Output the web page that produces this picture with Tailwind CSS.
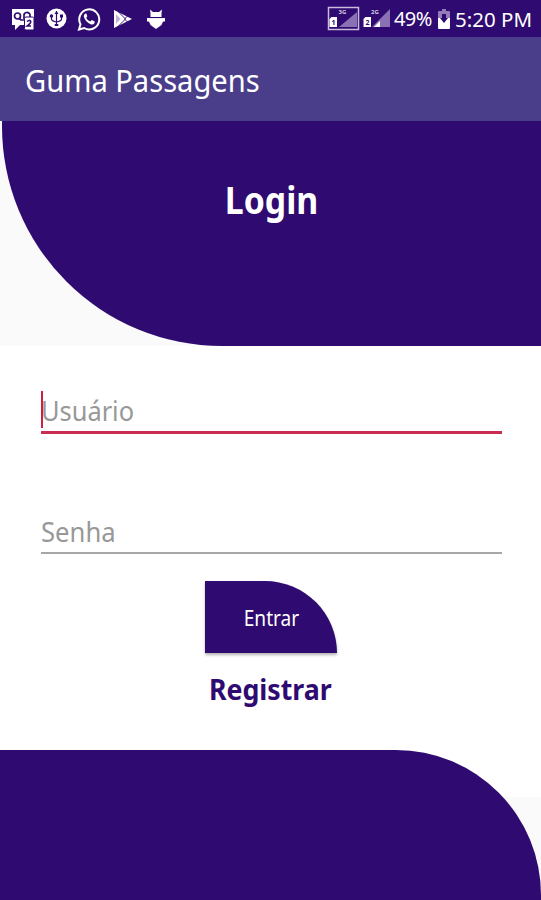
<!DOCTYPE html>
<html lang="pt">
<head>
<meta charset="utf-8">
<title>Guma Passagens</title>
<script src="https://cdn.jsdelivr.net/npm/@tailwindcss/browser@4"></script>
</head>
<body class="w-[541px] h-[900px] overflow-hidden flex flex-col bg-[#fafafa] font-['Noto_Sans',sans-serif]">
<header class="shrink-0">
  <div class="h-[37px] bg-[#2f0a70] flex items-center justify-between pl-[11px] pr-[8px] text-white">
    <div class="flex items-center gap-[10.500px]">
      <svg class="w-6 h-6" viewBox="0 0 24 24"><path d="M1 2h22v16H9l-5 5v-5H1z" fill="#fff"/><g fill="none" stroke="#2f0a70" stroke-width="1.700"><circle cx="6.500" cy="9" r="3"/><path d="M8 11.500l2 1.500h4M13 12V9a3 3 0 0 1 6-1v3"/></g><rect x="13.500" y="10" width="9.500" height="13" rx="1.500" fill="#fff" stroke="#2f0a70"/><path d="M16 14.500q2-2 3.500-.5t-3.500 5h4" fill="none" stroke="#2f0a70" stroke-width="1.500"/></svg>
      <svg class="w-[21px] h-[21px]" viewBox="0 0 21 21"><circle cx="10.500" cy="10.500" r="10" fill="#fff"/><path d="M10.500 3v15M5.500 7v4q0 2 5 3 5-1 5-3V7" fill="none" stroke="#2f0a70" stroke-width="1.200"/><g fill="#2f0a70"><circle cx="5.500" cy="8" r="1.700"/><rect x="14" y="6.500" width="3" height="3"/><path d="M8.500 6l2-3 2 3zM8.700 16h3.600v2H8.700z"/></g></svg>
      <svg class="w-6 h-6" viewBox="0 0 24 24"><path d="M2 22.500l1.500-5.300A10 10 0 1 1 7.200 21z" fill="none" stroke="#fff" stroke-width="2"/><path d="M8.400 6.500q-1.900.9-1.600 3.100 1.500 5.600 7.200 7.900 2.800.4 3.700-1.800v-1.300l-2.800-1.500-1.800 1.700q-2.800-1.200-3.900-3.900l1.100-1.500-1-2.600z" fill="#fff"/></svg>
      <svg class="w-5 h-5 ml-[1px]" viewBox="0 0 20 20"><path d="M1 1l18 9L1 19z" fill="#fff"/><path d="M5 2.500l7.500 7.500L5 17.500M11.500 10l3-3M11.500 10l3 3" fill="none" stroke="#2f0a70" stroke-width=".9"/><path d="M3 5L7.500 10 3 15z" fill="#2f0a70" opacity=".3"/></svg>
      <svg class="w-[18px] h-[20px] ml-[4px]" viewBox="0 0 18 20"><path d="M3.500 8V4L3 .5l3 2.500h6l3-2.500-.5 3.500v4zM0 9h18v3.500h-2L14.500 16 9 20l-5.500-4L2 12.500H0z" fill="#fff"/><path d="M2 8.600h14" stroke="#2f0a70" stroke-width=".8"/></svg>
    </div>
    <div class="flex items-center">
      <svg class="w-[66px] h-[26px] -ml-px mr-px" viewBox="0 0 66 26"><rect x="1.500" y="1.500" width="30" height="22" fill="none" stroke="#c9bddd" stroke-width="1.500"/><path d="M12 21L30 6v15zM45 21L63 3v18z" fill="#8971b3"/><path d="M47 21l6-6v6z" fill="#fff"/><path d="M2.500 13l2-2H10v10H2.500zM36.500 13l2-2H44v10h-7.500z" fill="#fff"/><g font-size="6" font-weight="700" font-family="Noto Sans" fill="#d8cde8"><text x="11.500" y="8">3G</text><text x="44" y="8">2G</text></g><g font-size="7" font-weight="700" font-family="Noto Sans" fill="#2f0a70"><text x="4.500" y="19">1</text><text x="38.500" y="19">2</text></g></svg>
      <span class="w-[39px] text-[20px] leading-6 tracking-[-0.6px] whitespace-nowrap">49%</span>
      <svg class="w-3 h-5 ml-[5px]" viewBox="0 0 12 20"><path d="M4 0h4v2h3q1 0 1 1v16H0V3q0-1 1-1h3z" fill="#937cb9"/><path d="M0 9h3l3 4 3-4h3v10q0 1-1 1H1q-1 0-1-1z" fill="#fff"/><path d="M4 5h4v4h2l-4 5-4-5h2z" fill="#2f0a70"/></svg>
      <span class="w-[78px] ml-[5px] text-[20.500px] leading-6 whitespace-nowrap">5:20 PM</span>
    </div>
  </div>
  <div class="h-[84px] bg-[#4a3e8b] flex items-center pl-[25px] pt-[3px]">
    <h1 class="text-[30px] leading-10 text-white whitespace-nowrap origin-left scale-x-[0.97]">Guma Passagens</h1>
  </div>
</header>
<section class="shrink-0 h-[225px] bg-[#fafafa] pl-[2px]">
  <div class="h-full bg-[#2f0a70] rounded-bl-[220px] flex justify-center pt-[52px]">
    <h2 class="text-[38px] leading-[52px] font-bold text-white whitespace-nowrap scale-x-[0.89]">Login</h2>
  </div>
</section>
<main class="shrink-0 h-[404px] bg-white flex flex-col items-center">
  <div class="relative left-[0.500px] w-[461px] h-[88px] pt-[47px] border-b-[3px] border-[#cb2c51] text-[27px] leading-9 text-[#989898]"><span class="inline-block origin-left scale-x-[0.94]">Usuário</span><i class="absolute left-0 top-[45px] w-[2px] h-[37px] bg-[#cb2044]"></i></div>
  <div class="relative left-[0.500px] w-[461px] h-[120px] pt-[80px] border-b-2 border-[#a7a7a7] text-[27px] leading-9 text-[#989898]"><span class="inline-block origin-left scale-x-[0.95]">Senha</span></div>
  <button class="mt-[27px] w-[132px] h-[72px] pl-[2px] pt-[3px] bg-[#2f0a70] rounded-tr-[72px] shadow-[0_2px_3px_rgba(0,0,0,0.3)] text-white text-[21px]"><span class="inline-block scale-x-[0.91]">Entrar</span></button>
  <a class="mt-[16px] text-[28px] leading-10 font-bold text-[#2f0a70] scale-x-[0.955]">Registrar</a>
</main>
<footer class="grow bg-linear-to-b from-white from-[47px] to-[#fafafa] to-[47px]">
  <div class="h-full bg-[#2f0a70] rounded-tr-[145px]"></div>
</footer>
</body>
</html>
